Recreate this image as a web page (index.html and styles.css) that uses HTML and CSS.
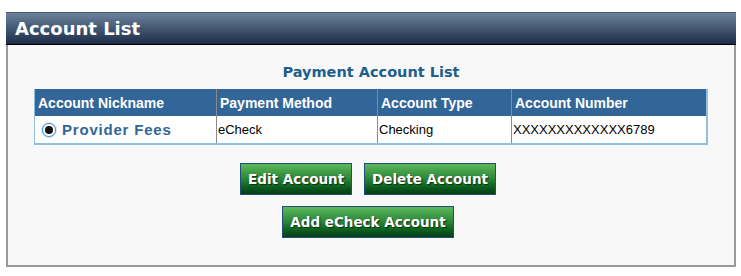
FILE: index.html
```html
<!DOCTYPE html>
<html>
<head>
<meta charset="utf-8">
<link rel="stylesheet" href="styles.css">
</head>
<body>
<div class="panel">
  <div class="panel-head">Account List</div>
  <div class="panel-body">
    <div class="title">Payment Account List</div>
    <table class="acct">
      <thead>
        <tr>
          <th class="c1">Account Nickname</th>
          <th class="c2">Payment Method</th>
          <th class="c3">Account Type</th>
          <th class="c4">Account Number</th>
        </tr>
      </thead>
      <tbody>
        <tr>
          <td class="nick"><span class="radio"><span class="dot"></span></span>Provider Fees</td>
          <td>eCheck</td>
          <td>Checking</td>
          <td>XXXXXXXXXXXXX6789</td>
        </tr>
      </tbody>
    </table>
    <div class="btn-row">
      <button class="btn">Edit Account</button>
      <button class="btn">Delete Account</button>
    </div>
    <div class="btn-row second">
      <button class="btn">Add eCheck Account</button>
    </div>
  </div>
</div>
</body>
</html>
```
FILE: styles.css
```css
html, body {
  margin: 0;
  padding: 0;
  background: #ffffff;
}
body {
  padding: 12px 0 0 6px;
  font-family: "Liberation Sans", Arial, sans-serif;
}
.panel {
  width: 730px;
  box-sizing: border-box;
}
.panel-head {
  height: 33px;
  box-sizing: border-box;
  background: linear-gradient(#6b819c, #1b2d48);
  border-bottom: 1px solid #000;
  border-top: 1px solid #4a5a70;
  color: #fff;
  font-family: "DejaVu Sans", Verdana, sans-serif;
  font-weight: bold;
  font-size: 18px;
  line-height: 32px;
  padding-left: 9px;
}
.panel-body {
  background: #f8f8f8;
  border-left: 2px solid #9a9a9a;
  border-right: 2px solid #9a9a9a;
  border-bottom: 2px solid #9a9a9a;
  height: 222px;
  box-sizing: border-box;
  padding-top: 18px;
  display: flex;
  flex-direction: column;
  align-items: center;
}
.title {
  font-family: "DejaVu Sans", Verdana, sans-serif;
  font-weight: bold;
  font-size: 14.5px;
  color: #1c5f8c;
  line-height: 18px;
  margin-bottom: 8px;
}
.acct {
  width: 674px;
  border-collapse: collapse;
  border: 2px solid #8fc0e0;
  border-top: none;
  border-left: 1px solid #8fc0e0;
  font-size: 13px;
  background: #fff;
}
.acct th {
  background: #336698;
  color: #fff;
  text-align: left;
  font-weight: bold;
  font-size: 14px;
  height: 27px;
  padding: 0 3px;
  border-left: 1px solid #8a8a8a;
}
.acct th.c1 { border-left: none; width: 175px; }
.acct th.c2 { width: 154px; }
.acct th.c3 { width: 127px; }
.acct td {
  height: 27px;
  padding: 0 1px;
  border-left: 1px solid #8a8a8a;
  color: #000;
}
.acct td.nick {
  border-left: none;
  color: #336698;
  font-weight: bold;
  font-size: 15px;
  letter-spacing: 0.8px;
  padding-left: 7px;
}
.radio {
  display: inline-block;
  width: 12px;
  height: 12px;
  border: 1px solid #3d8fd0;
  border-radius: 50%;
  background: #fff;
  vertical-align: -2px;
  margin-right: 6px;
  position: relative;
  box-shadow: 0 0 0 1px #cfe4f5;
}
.radio .dot {
  position: absolute;
  left: 2px;
  top: 2px;
  width: 8px;
  height: 8px;
  border-radius: 50%;
  background: #111;
}
.btn-row {
  display: flex;
  gap: 12px;
  margin-top: 18px;
  margin-right: 6px;
}
.btn-row.second {
  margin-top: 11px;
}
.btn {
  height: 32px;
  padding: 0 7px;
  border: 1px solid #1d4f78;
  background: linear-gradient(#5cb85c, #2f8a3a 45%, #0b5a1e 80%, #073d16);
  color: #fff;
  font-family: "DejaVu Sans", Verdana, sans-serif;
  font-weight: bold;
  font-size: 13.5px;
  text-shadow: 1px 1px 1px #063010;
  cursor: pointer;
}
```
